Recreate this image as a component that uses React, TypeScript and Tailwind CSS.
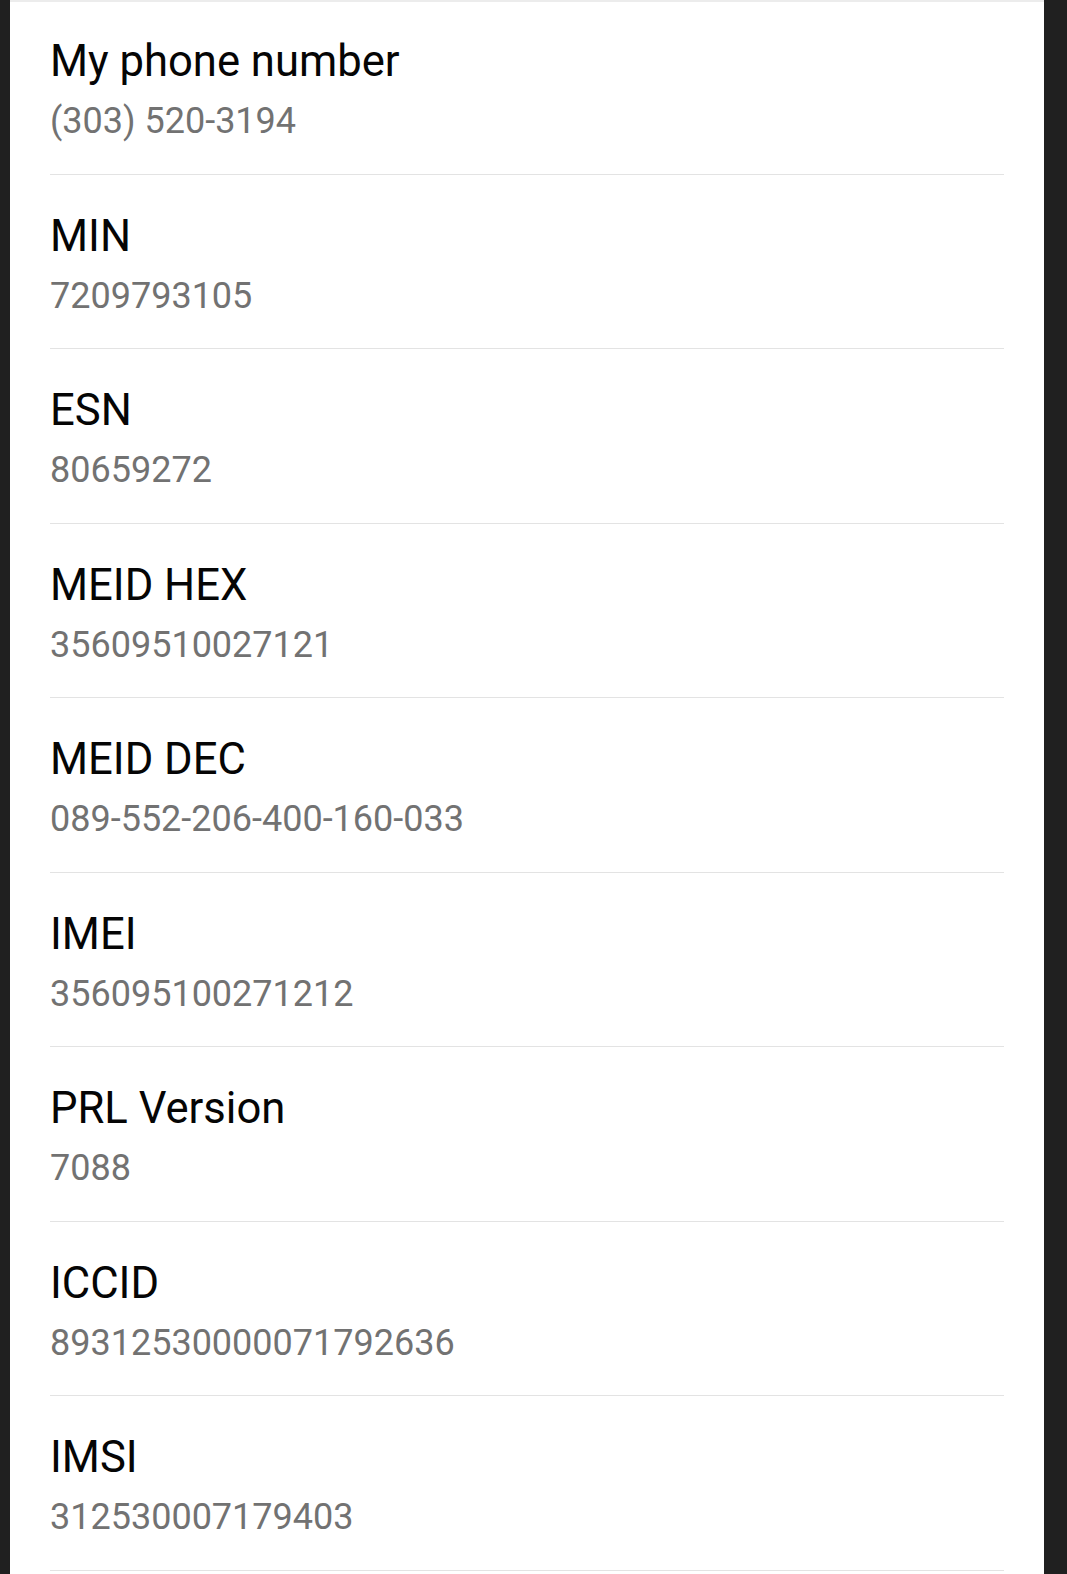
const rows = [
  { label: 'My phone number', value: '(303) 520-3194' },
  { label: 'MIN', value: '7209793105' },
  { label: 'ESN', value: '80659272' },
  { label: 'MEID HEX', value: '35609510027121' },
  { label: 'MEID DEC', value: '089-552-206-400-160-033' },
  { label: 'IMEI', value: '356095100271212' },
  { label: 'PRL Version', value: '7088' },
  { label: 'ICCID', value: '89312530000071792636' },
  { label: 'IMSI', value: '312530007179403' },
];

function InfoRow({ label, value }: { label: string; value: string }) {
  return (
    <div className="h-[174.5px] border-b border-[#e3e3e3] pt-[36px]">
      <div className="text-[43.6px] leading-[52px] text-[#050505]">{label}</div>
      <div className="mt-[11px] text-[36px] leading-[44px] text-[#727272]">{value}</div>
    </div>
  );
}

export default function App() {
  return (
    <div
      className="flex h-[1574px] w-[1067px] overflow-hidden bg-[#202020]"
      style={{ fontFamily: 'Roboto, "Noto Sans", sans-serif' }}
    >
      <div className="ml-[10px] h-full w-[1034px] border-t-2 border-[#ececec] bg-white px-[40px]">
        <div className="-mt-[2px]">
          {rows.map((r) => (
            <InfoRow key={r.label} label={r.label} value={r.value} />
          ))}
        </div>
      </div>
    </div>
  );
}
